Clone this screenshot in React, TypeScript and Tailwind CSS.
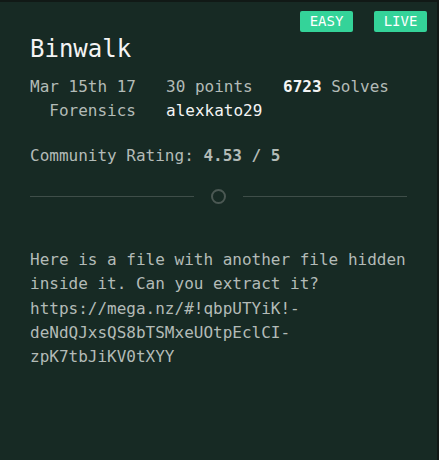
import React from "react";

export default function App() {
  const mono = { fontFamily: '"DejaVu Sans Mono", "Liberation Mono", monospace' };
  return (
    <div
      className="w-[439px] h-[460px] bg-[#172a24] border-t-2 border-r-2 border-[#111916] text-[#b3bbb7] text-[16px]"
      style={mono}
    >
      <div className="flex justify-end gap-[21px] pt-[9px] pr-[10px]">
        <span className="w-[53px] h-[21px] rounded-[2px] bg-[#34d399] text-white text-[14px] leading-[21px] text-center">
          EASY
        </span>
        <span className="w-[53px] h-[21px] rounded-[2px] bg-[#34d399] text-white text-[14px] leading-[21px] text-center">
          LIVE
        </span>
      </div>
      <div className="px-[30px]">
        <h1 className="text-[24px] leading-[30px] text-[#f4f4f4] mt-[2px]">Binwalk</h1>
        <div className="mt-[11px] leading-[24px]">
          <div className="flex gap-x-[30px]">
            <span className="w-[106px] shrink-0">Mar 15th 17</span>
            <span className="w-[87px] shrink-0">30 points</span>
            <span>
              <span className="font-bold text-[#f4f4f4]">6723</span> Solves
            </span>
          </div>
          <div className="flex gap-x-[30px]">
            <span className="w-[106px] shrink-0 text-right">Forensics</span>
            <span className="text-[#f4f4f4]">alexkato29</span>
          </div>
        </div>
        <div className="mt-[21px] leading-[24px]">
          Community Rating: <span className="font-bold">4.53 / 5</span>
        </div>
        <div className="flex items-center mt-[20px] h-[16px]">
          <div className="flex-1 h-px bg-[#3f4e49]" />
          <div className="w-[15px] h-[15px] rounded-full border-2 border-[#4b5853] mx-[17px]" />
          <div className="flex-1 h-px bg-[#3f4e49]" />
        </div>
        <p className="mt-[44px] leading-[24.3px]">
          Here is a file with another file hidden inside it. Can you extract it?
          https://mega.nz/#!qbpUTYiK!-deNdQJxsQS8bTSMxeUOtpEclCI-zpK7tbJiKV0tXYY
        </p>
      </div>
    </div>
  );
}
